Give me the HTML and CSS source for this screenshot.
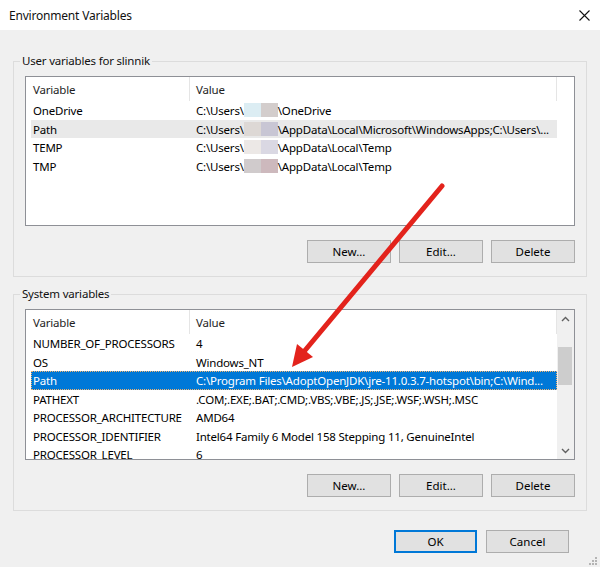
FILE: index.html
```html
<!DOCTYPE html>
<html lang="en">
  <head>
    <meta charset="UTF-8" />
    <title>Environment Variables</title>
    <link rel="stylesheet" href="styles.css">
  </head>
  <body>
    <div class="titlebar">
      <span class="title">Environment Variables</span>
      <svg class="close" width="11" height="11" viewBox="0 0 11 11">
        <path d="M0.5 0.5 L10.5 10.5 M10.5 0.5 L0.5 10.5" stroke="#111" stroke-width="1.1" />
      </svg>
    </div>

    <div class="dialog">
      <fieldset class="group">
        <legend>User variables for slinnik</legend>
        <div class="list">
          <div class="list-main">
            <div class="list-head">
              <div class="head-var">Variable</div>
              <div class="head-val">Value</div>
            </div>
            <div class="row">
              <div class="cell-var">OneDrive</div>
              <div class="cell-val">C:\Users\<span class="blur blur-1"></span>\OneDrive</div>
            </div>
            <div class="row soft">
              <div class="cell-var">Path</div>
              <div class="cell-val">C:\Users\<span class="blur blur-2"></span>\AppData\Local\Microsoft\WindowsApps;C:\Users\...</div>
            </div>
            <div class="row">
              <div class="cell-var">TEMP</div>
              <div class="cell-val">C:\Users\<span class="blur blur-3"></span>\AppData\Local\Temp</div>
            </div>
            <div class="row">
              <div class="cell-var">TMP</div>
              <div class="cell-val">C:\Users\<span class="blur blur-4"></span>\AppData\Local\Temp</div>
            </div>
          </div>
        </div>
        <div class="buttons">
          <button class="btn">New...</button>
          <button class="btn">Edit...</button>
          <button class="btn">Delete</button>
        </div>
      </fieldset>

      <fieldset class="group">
        <legend>System variables</legend>
        <div class="list tall">
          <div class="list-main">
            <div class="list-head">
              <div class="head-var">Variable</div>
              <div class="head-val">Value</div>
            </div>
            <div class="row">
              <div class="cell-var">NUMBER_OF_PROCESSORS</div>
              <div class="cell-val">4</div>
            </div>
            <div class="row">
              <div class="cell-var">OS</div>
              <div class="cell-val">Windows_NT</div>
            </div>
            <div class="row selected">
              <div class="cell-var">Path</div>
              <div class="cell-val">C:\Program Files\AdoptOpenJDK\jre-11.0.3.7-hotspot\bin;C:\Wind...</div>
            </div>
            <div class="row">
              <div class="cell-var">PATHEXT</div>
              <div class="cell-val">.COM;.EXE;.BAT;.CMD;.VBS;.VBE;.JS;.JSE;.WSF;.WSH;.MSC</div>
            </div>
            <div class="row">
              <div class="cell-var">PROCESSOR_ARCHITECTURE</div>
              <div class="cell-val">AMD64</div>
            </div>
            <div class="row">
              <div class="cell-var">PROCESSOR_IDENTIFIER</div>
              <div class="cell-val">Intel64 Family 6 Model 158 Stepping 11, GenuineIntel</div>
            </div>
            <div class="row">
              <div class="cell-var">PROCESSOR_LEVEL</div>
              <div class="cell-val">6</div>
            </div>
          </div>
          <div class="scrollbar">
            <div class="scroll-btn">
              <svg width="9" height="6" viewBox="0 0 9 6"><path d="M1 5 L4.5 1.5 L8 5" fill="none" stroke="#606060" stroke-width="1.4" /></svg>
            </div>
            <div class="scroll-track"><div class="thumb"></div></div>
            <div class="scroll-btn">
              <svg width="9" height="6" viewBox="0 0 9 6"><path d="M1 1 L4.5 4.5 L8 1" fill="none" stroke="#606060" stroke-width="1.4" /></svg>
            </div>
          </div>
        </div>
        <div class="buttons">
          <button class="btn">New...</button>
          <button class="btn">Edit...</button>
          <button class="btn">Delete</button>
        </div>
      </fieldset>

      <div class="dialog-buttons">
        <button class="btn default">OK</button>
        <button class="btn">Cancel</button>
      </div>
    </div>

    <!-- red annotation arrow drawn over the dialog -->
    <svg class="arrow" width="600" height="567" viewBox="0 0 600 567">
      <line x1="442" y1="186" x2="302" y2="354" stroke="#e3231c" stroke-width="5" stroke-linecap="round" />
      <polygon points="292,367 297,344 313,357" fill="#e3231c" />
    </svg>

    <svg class="grip" width="9" height="9" viewBox="0 0 9 9">
      <rect x="7" y="1" width="2" height="2" fill="#b4b4b4" />
      <rect x="4" y="4" width="2" height="2" fill="#b4b4b4" />
      <rect x="7" y="4" width="2" height="2" fill="#b4b4b4" />
      <rect x="1" y="7" width="2" height="2" fill="#b4b4b4" />
      <rect x="4" y="7" width="2" height="2" fill="#b4b4b4" />
      <rect x="7" y="7" width="2" height="2" fill="#b4b4b4" />
    </svg>
  </body>
</html>
```

FILE: styles.css
```css
* {
  box-sizing: border-box;
}

body {
  margin: 0;
  width: 600px;
  height: 567px;
  overflow: hidden;
  position: relative;
  background: #f0f0f0;
  font-family: "Noto Sans", "Open Sans", sans-serif;
  font-size: 11.5px;
  letter-spacing: -0.2px;
  color: #000;
}

.titlebar {
  height: 30px;
  background: #fff;
  display: flex;
  align-items: center;
  justify-content: space-between;
  padding: 0 10px 0 9px;
}

.title {
  font-size: 12px;
  color: #111;
}

.dialog {
  padding: 23px 13px 0;
}

.group {
  margin: 0;
  min-width: 0;
  border: 1px solid #dcdcdc;
  padding: 7px 11px 13px;
}

.group + .group {
  margin-top: 9px;
}

.group legend {
  padding: 0 2px;
  margin-left: -5px;
  line-height: 16px;
  color: #111;
}

.list {
  display: flex;
  height: 150px;
  background: #fff;
  border: 1px solid #8e9096;
  overflow: hidden;
}

.list.tall {
  height: 151px;
}

.list-main {
  width: 531px;
}

.list-head {
  display: flex;
  height: 24px;
  line-height: 25px;
  color: #1e1e1e;
}

.head-var {
  width: 164px;
  padding-left: 7px;
  border-right: 1px solid #e5e5e5;
}

.head-val {
  flex: 1;
  padding-left: 6px;
  border-right: 1px solid #e5e5e5;
}

.row {
  display: flex;
  height: 18.5px;
  line-height: 20px;
  margin-left: 5px;
  white-space: nowrap;
}

.cell-var {
  width: 159px;
  padding-left: 2px;
  overflow: hidden;
}

.cell-val {
  flex: 1;
  padding-left: 6px;
  overflow: hidden;
}

.row.soft {
  background: #e9e9e9;
}

.row.selected {
  background: #0078d7;
  color: #fff;
  outline: 1px dotted #f3b36e;
  outline-offset: -1px;
}

.blur {
  display: inline-block;
  width: 34px;
  height: 14px;
  vertical-align: -2px;
}

.blur-1 {
  background: linear-gradient(90deg, #dcedf3 0 50%, #d3cdcc 50%);
}

.blur-2 {
  background: linear-gradient(90deg, #ddd8d5 0 50%, #c8c6d4 50%);
}

.blur-3 {
  background: linear-gradient(90deg, #ece8e6 0 50%, #dad8e3 50%);
}

.blur-4 {
  background: linear-gradient(90deg, #d0cbcc 0 50%, #cdb9bd 50%);
}

.scrollbar {
  width: 17px;
  display: flex;
  flex-direction: column;
  background: #f0f0f0;
}

.scroll-btn {
  height: 17px;
  display: flex;
  align-items: center;
  justify-content: center;
}

.scroll-track {
  flex: 1;
  padding: 20px 2px 0 1px;
}

.thumb {
  height: 38px;
  background: #cdcdcd;
}

.buttons {
  display: flex;
  justify-content: flex-end;
  gap: 8px;
  margin-top: 14px;
}

.btn {
  width: 84px;
  height: 23px;
  padding: 0;
  background: #e1e1e1;
  border: 1px solid #adadad;
  font: inherit;
  color: #000;
}

.dialog-buttons {
  display: flex;
  justify-content: flex-end;
  gap: 9px;
  margin-top: 19px;
  padding-right: 18px;
}

.dialog-buttons .btn {
  width: 83px;
}

.btn.default {
  border: 2px solid #0078d7;
}

.arrow {
  position: absolute;
  left: 0;
  top: 0;
  pointer-events: none;
}

.grip {
  position: absolute;
  right: 3px;
  bottom: 2px;
}
```
